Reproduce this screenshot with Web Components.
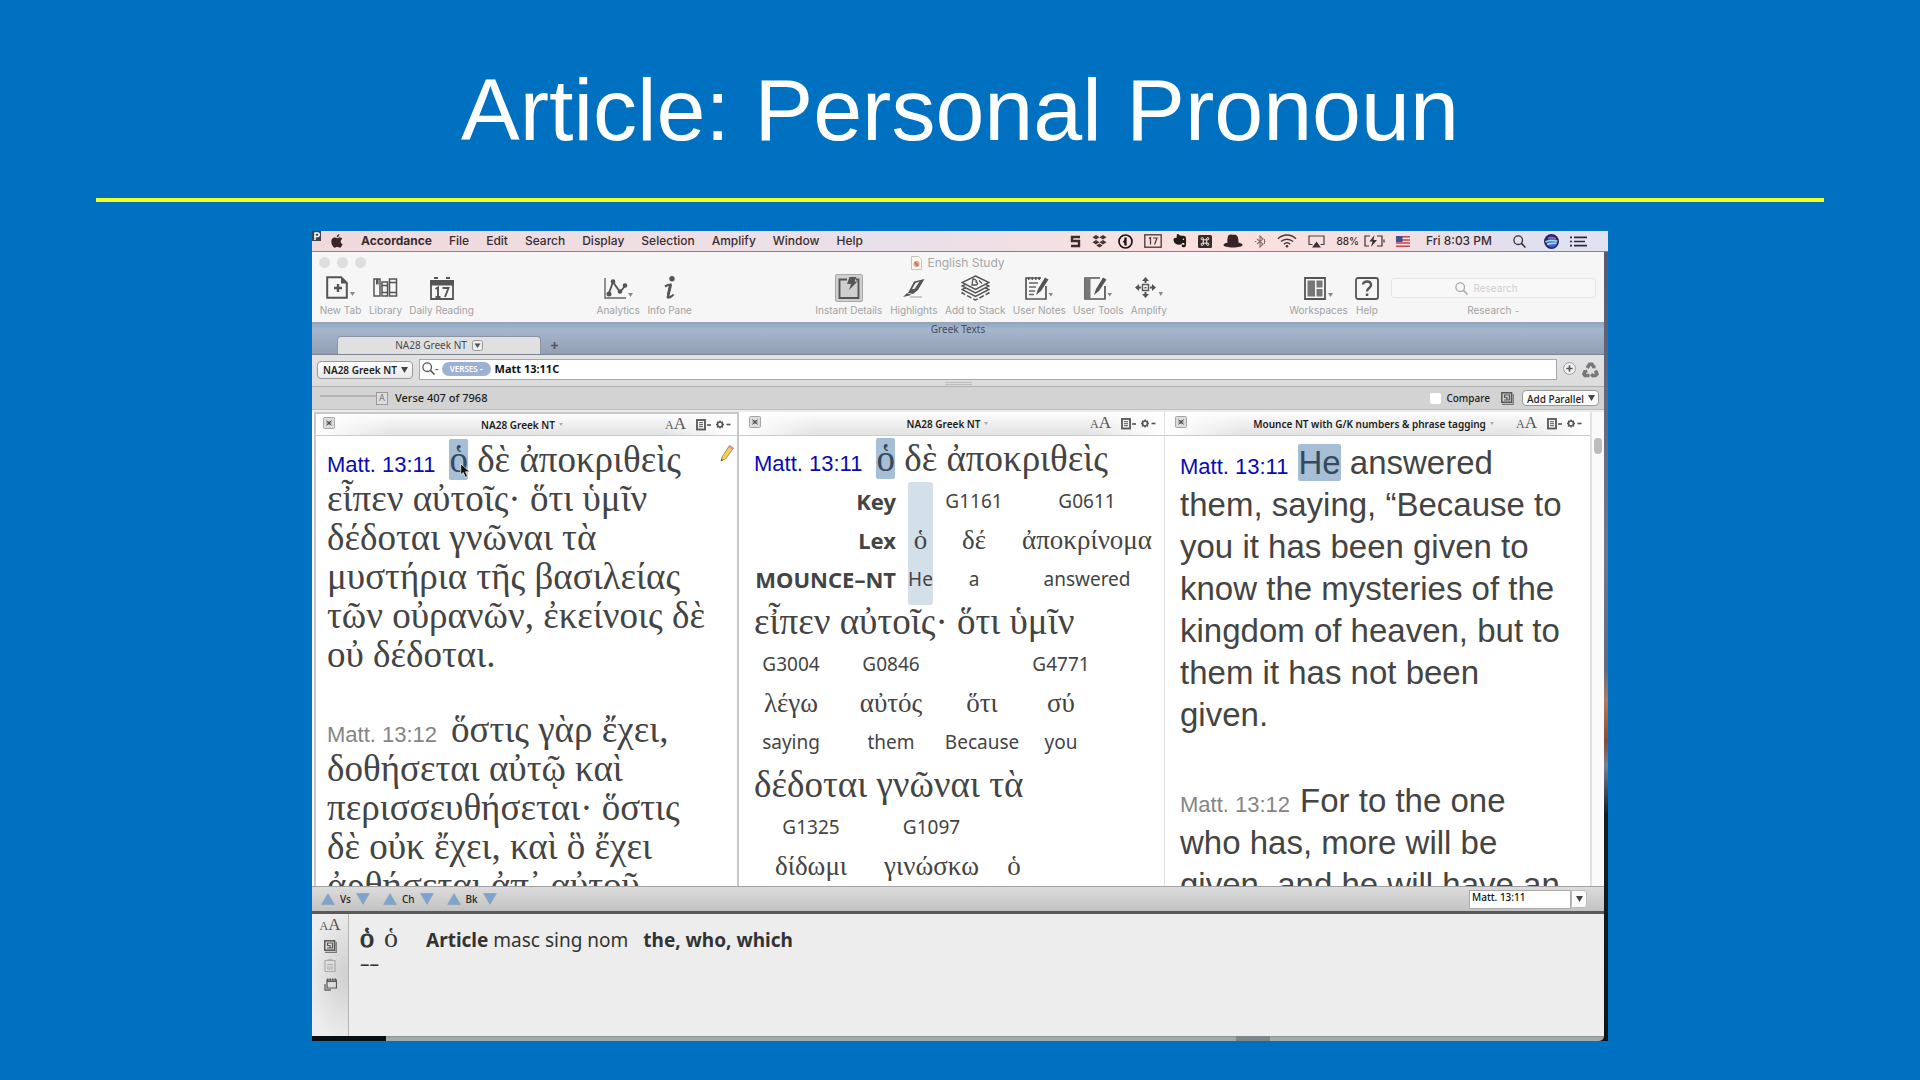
<!DOCTYPE html>
<html lang="en">
<head>
<meta charset="utf-8">
<title>Article: Personal Pronoun</title>
<style>
html,body{margin:0;height:100%}
body{background:#0070c0;font-family:"Noto Sans","Liberation Sans",sans-serif;color:#444}
</style>
</head>
<body>
<lesson-slide>
  <span slot="title">Article: Personal Pronoun</span>
  <study-app></study-app>
</lesson-slide>
<script>
const define=(name,html,setup)=>customElements.define(name,class extends HTMLElement{
  connectedCallback(){
    if(this.shadowRoot)return;
    const t=document.createElement('template');
    t.innerHTML='<style>*{box-sizing:border-box}button,input,select{font:inherit;color:inherit;margin:0;padding:0;border:0;background:none;border-radius:0;outline:0}select{appearance:none}</style>'+(typeof html==='function'?html(this):html);
    this.attachShadow({mode:'open'}).append(t.content.cloneNode(true));
    if(setup)setup(this);
  }
});

const ICONS={
 apple:[12,14,'<path fill="#3a2527" d="M8.300 0C8.500 1.600 7.200 3.200 5.800 3.200 5.600 1.700 6.900 .3 8.300 0zM11.600 10.200C11 11.700 9.900 13.700 8.700 13.700 7.800 13.700 7.500 13.100 6.300 13.100 5.100 13.100 4.800 13.700 3.900 13.700 2.500 13.700 .3 10.600 .3 7.700 .3 5 2 3.600 3.700 3.600 4.800 3.600 5.600 4.200 6.200 4.200 6.900 4.200 7.800 3.500 9 3.500 9.900 3.500 10.800 3.900 11.300 4.700 9 6.200 9.400 9.300 11.600 10.200z"/>'],
 parallels:[9,10,'<rect width="9" height="10" fill="#3d4450"/><path d="M3 9V2h2.500a1.600 1.600 0 0 1 0 3.500H3" fill="none" stroke="#fff" stroke-width="1.500"/>'],
 snag:[11,13,'<path d="M10 2H2v4h7v5H1" fill="none" stroke="#3a2c2a" stroke-width="2.400"/>'],
 dropbox:[15,13,'<g fill="#4a3330"><path d="M4 0l3.500 2.300L4 4.600.5 2.300zM11 0l3.500 2.300L11 4.600 7.500 2.300zM4 5l3.500 2.200L4 9.500.5 7.200zM11 5l3.500 2.200L11 9.500 7.500 7.200zM7.500 8.500l3.200 2-3.200 2.100-3.200-2.100z"/></g>'],
 onepass:[15,15,'<circle cx="7.500" cy="7.500" r="6.500" fill="none" stroke="#1d1515" stroke-width="1.700"/><path d="M7.500 3.500v3.200l-1 1 1 1v2.800" stroke="#1d1515" stroke-width="2.400" fill="none"/>'],
 cal:[18,14,'<rect x=".8" y=".8" width="16.400" height="12.400" fill="none" stroke="#463634" stroke-width="1.300"/><path d="M5 4.500l1.500-1v7M9 4h4l-2.500 6.500" fill="none" stroke="#463634" stroke-width="1.200"/>'],
 evernote:[14,14,'<path fill="#221a1a" d="M4 0C6 0 6 1 7 1.400c2 .2 5 .3 5.600 1.200.7 2 .7 7 .2 9.400-.4 1.700-3.500 1.700-4 .6-.4-1.200.2-2.400 1.500-2.400V11h1V9c-2-.4-2.600.3-3 1.500C4.500 11 1.500 10.500.7 7 0 4.500.8 3.700 3.600 3.700z"/><circle cx="10.500" cy="5.300" r=".7" fill="#fff"/>'],
 cmd:[14,13,'<rect width="14" height="13" rx="1.500" fill="#3a2b2b"/><path d="M5.300 4.800H8.700V8.200H5.300zM5.300 4.800V4a1.100 1.100 0 1 0-1.100.800zM8.700 4.800V4a1.100 1.100 0 1 1 1.100.800zM5.300 8.200V9a1.100 1.100 0 1 1-1.100-.8zM8.700 8.200V9a1.100 1.100 0 1 0 1.100-.8z" fill="none" stroke="#fff" stroke-width=".9"/>'],
 hat:[20,14,'<path fill="#382426" d="M4.500 8.500C4 4 5 .5 7.500.5 9 .5 9.500 1 10.500.8c3.500-.6 5 1.200 5 7.700 2 .5 4 1 4 2.500 0 1.500-4 2.500-9.500 2.500S.5 12.500.5 11C.5 9.500 2.500 9 4.500 8.500z"/>'],
 bt:[12,13,'<path d="M3 4l6 5-3 3V1l3 3-6 5" fill="none" stroke="#826c6c" stroke-width="1.100"/><path d="M1 6.500h1.200M10 6.500h1.500M10.500 4v5" stroke="#826c6c"/>'],
 wifi:[20,14,'<g fill="none" stroke="#46383c" stroke-width="1.400"><path d="M1 4.800C6-.2 14-.2 19 4.800M4 7.600c3.500-3.200 8.500-3.200 12 0M6.800 10.200c2-1.700 4.400-1.700 6.400 0"/></g><circle cx="10" cy="12.200" r="1.300" fill="#46383c"/>'],
 airplay:[17,13,'<path d="M4.500 9.500H1V1h15v8.500h-3.500" fill="none" stroke="#4b4045" stroke-width="1.200"/><path d="M8.500 6.500l4.500 6H4z" fill="#3c3035"/>'],
 battery:[21,12,'<path d="M6 1H1v10h4M13 1h5v10h-5M20 4.500v3" fill="none" stroke="#333" stroke-width="1.200"/><path d="M10.500 0L5.500 6.500h3L7 12l6-7h-3.500z" fill="#333"/>'],
 flag:[14,11,'<rect width="14" height="11" fill="#f3dfe2"/><path d="M0 .8h14M0 3.900h14M0 7h14M0 10.200h14" stroke="#c2454f" stroke-width="1.500"/><rect width="6.500" height="6" fill="#40508f"/>'],
 search:[13,13,'<circle cx="5.200" cy="5.200" r="4.300" fill="none" stroke="currentColor" stroke-width="1.300"/><path d="M8.400 8.400l4.100 4.100" stroke="currentColor" stroke-width="1.500"/>'],
 siri:[15,15,'<circle cx="7.500" cy="7.500" r="7.500" fill="#2b2460"/><circle cx="8" cy="8.500" r="5" fill="#3a67c9"/><path d="M1.500 8c4-3 8-1 12-1M3 10.500c4-2 6-.5 9.500-1.500" stroke="#9fe0f0" stroke-width="1.600" fill="none"/><path d="M4 4.500c3-2 6-1 8 .5" stroke="#b05bc4" stroke-width="1.400" fill="none"/>'],
 list:[17,11,'<path d="M0 1.300h2M0 5.500h2M0 9.700h2M4 1.300h13M4 5.500h11M4 9.700h13" stroke="#2b2b38" stroke-width="1.700"/>'],
 newtab:[29,24,'<path d="M1.200 1.200h14l5.600 5.600v15H1.200z" fill="none" stroke="#555" stroke-width="2"/><path d="M15 1v6.500h6z" fill="#555"/><path d="M8 12h8M12 8v8" stroke="#555" stroke-width="2.400"/><path d="M24 16h5l-2.500 4z" fill="#888"/>'],
 library:[25,20,'<g fill="none" stroke="#555" stroke-width="1.500"><path d="M1 1h6v17H1zM9 4h5.500v14H9zM16.500 1h7v17h-7zM9 7.500h5.500M9 14.500h5.500M16.500 4.500h7M16.500 14.500h7"/></g><path d="M3 1h2.600v6L4.300 5.800 3 7z" fill="#555"/>'],
 daily:[24,23,'<path d="M1 4h22v18H1z" fill="#f6f6f6" stroke="#555" stroke-width="1.800"/><path d="M0 3h24v5.500H0z" fill="#555"/><path d="M4 1h4M16 1h4" stroke="#555" stroke-width="2"/><path d="M5.500 12l2.500-1.500V20M5.500 20h5M12.500 11h6l-3.500 9" fill="none" stroke="#555" stroke-width="1.900"/>'],
 analytics:[29,23,'<path d="M1 1v20h21" fill="none" stroke="#666" stroke-width="1.400"/><path d="M5 16L9 5l7 10 5-6" fill="none" stroke="#555" stroke-width="1.800"/><g fill="#555"><circle cx="5" cy="17" r="2.500"/><circle cx="9" cy="4.500" r="2.300"/><circle cx="16" cy="14.500" r="2.300"/><circle cx="21" cy="8.500" r="2.300"/></g><path d="M24 16h5l-2.500 4z" fill="#888"/>'],
 info:[14,24,'<circle cx="9" cy="2.800" r="2.700" fill="#555"/><path d="M2 10.500c3-2 5.500-2 5.500-2S4 21 5 21.500s4.500-1.500 5.500-3" fill="none" stroke="#555" stroke-width="2.200"/><path d="M6 9h3L6 22H3.500z" fill="#555"/>'],
 instant:[28,28,'<rect x=".5" y=".5" width="27" height="27" rx="1.500" fill="#cfcfcf" stroke="#a8a8a8"/><path d="M12 5.500H4.500v18.500h19V5.500H21" fill="none" stroke="#555" stroke-width="1.900"/><path d="M14.500 3h7l-2 4.500h3L14 16l2-6h-4z" fill="#555"/>'],
 highlight:[24,20,'<path d="M12 3.500L22.500 1l-6.500 11-5 4-5-1z" fill="#555"/><path d="M12.500 11l5-7.500-4 1.500-3.500 6z" fill="#f2f2f2"/><path d="M5 15l4.500 2L1 19z" fill="#555"/><path d="M8 19h12" stroke="#999"/>'],
 stack:[29,26,'<g fill="#f5f5f5" stroke="#555" stroke-width="1.500"><path d="M14.500 11L28 18l-13.500 7L1 18z" stroke-dasharray="5 2"/><path d="M14.500 8L28 14.500l-13.500 7L1 14.500z"/><path d="M14.500 4.500L28 11l-13.500 7L1 11z"/><path d="M14.500 1L28 7.500l-13.500 7L1 7.500z"/></g><path d="M12 4l-1 6h4.500c2-1 1-3-1-3 2-.5 1-2.500-2.500-3zM18 5.500l3 3" fill="none" stroke="#555" stroke-width="1.300"/>'],
 notes:[28,25,'<path d="M21 10v13H1V2h15" fill="none" stroke="#555" stroke-width="1.700"/><path d="M3 2.500h14" stroke="#555" stroke-width="3" stroke-dasharray="1.500 2"/><path d="M4 7h9M4 11h7M4 15h6M4 18.500h5" stroke="#666" stroke-width="1.500"/><path d="M11 19l2-6L20 1.500l3.500 2L16 15z" fill="#555"/><path d="M23.500 17h4.500l-2.200 3.500z" fill="#888"/>'],
 tools:[28,25,'<path d="M21 10v13H1V2h15" fill="none" stroke="#555" stroke-width="1.700"/><path d="M1 2h5.500v21H1z" fill="#777"/><path d="M10 19l2-6L19 1.500l3.500 2L15 15z" fill="#555"/><path d="M23.500 17h4.500l-2.200 3.500z" fill="#888"/>'],
 amplify:[28,22,'<rect x="7.500" y="7.500" width="6" height="6" fill="none" stroke="#555" stroke-width="1.400"/><path d="M10.500 0l3.500 4H7zM10.500 21l3.500-4H7zM0 10.500L4 7v7zM21 10.500L17 7v7z" fill="#555"/><path d="M10.500 3v3M10.500 15v3M3 10.500h3M15 10.500h3" stroke="#555" stroke-width="2"/><path d="M9.500 10h2v1.500h-2z" fill="#555"/><path d="M23.500 15h4.500l-2.200 4z" fill="#888"/>'],
 work:[29,23,'<path d="M1 1h20v21H1z" fill="#f6f6f6" stroke="#555" stroke-width="1.800"/><path d="M3.500 3.500h7.500v16H3.500zM12.500 3.500h6v7h-6zM12.500 12h6v7.500h-6z" fill="#777"/><path d="M24 16h5l-2.500 4z" fill="#888"/>'],
 help:[24,23,'<rect x="1" y="1" width="22" height="21" rx="2" fill="none" stroke="#555" stroke-width="1.800"/><path d="M8 7.500C8 3.500 16 3.500 16 8c0 3-4 3-4 6.500" fill="none" stroke="#555" stroke-width="2.400"/><path d="M10.800 16.500h2.500V19h-2.500z" fill="#555"/>'],
 doc:[11,14,'<path d="M.5.5h7l3 3v10H.5z" fill="#fcf8f2" stroke="#c9c2b8"/><circle cx="5.500" cy="8" r="3" fill="#dba385"/><path d="M4 6l3 4" stroke="#a04c40"/>'],
 boxdown:[11,11,'<rect x=".5" y=".5" width="10" height="10" rx="2" fill="#eee" stroke="#999"/><path d="M2.500 3.500h6L5.500 8z" fill="#555"/>'],
 plus:[7,7,'<path d="M3.500 0v7M0 3.500h7" stroke="#555" stroke-width="1.700"/>'],
 circplus:[13,13,'<circle cx="6.500" cy="6.500" r="5.900" fill="#f4f4f4" stroke="#999"/><path d="M6.500 3.300v6.400M3.300 6.500h6.400" stroke="#555" stroke-width="1.600"/>'],
 recycle:[17,16,'<g fill="none" stroke="#777" stroke-width="3.400"><path d="M5.200 6L7.500 2.200h2.400L12 5.500"/><path d="M13.500 8.500L15 12l-1.500 1.500H10"/><path d="M3.500 8.500L1.800 12 3 13.500h4.500"/></g><path d="M10 6l3.500.6L13.500 3zM10.500 10.500v5.500l-2.500-2.700zM1 9l4-1.500.5 3.500z" fill="#777"/>'],
 layers:[13,13,'<path d="M1 12.300h11.300V2" fill="none" stroke="#777" stroke-width="1.200"/><rect x=".8" y=".8" width="9.800" height="9.400" fill="none" stroke="#555" stroke-width="1.500"/><path d="M3 8h5.500V3H3.500v2.500H6V8" fill="none" stroke="#555" stroke-width="1.200"/>'],
 close:[12,12,'<rect x=".5" y=".5" width="11" height="11" rx="1" fill="#dcdcdc" stroke="#a6a6a6"/><path d="M3.500 3.500l5 5M8.500 3.500l-5 5M3.500 5h5M3.500 7h5" stroke="#555" stroke-width="1"/>'],
 page:[15,12,'<rect x="1" y="1" width="8" height="9.500" fill="none" stroke="#555" stroke-width="1.800"/><path d="M3 3.700h4M3 5.700h4M3 7.700h4" stroke="#555"/><path d="M11 6h4" stroke="#555" stroke-width="1.600"/>'],
 gear:[15,9,'<circle cx="4" cy="4.500" r="2.500" fill="none" stroke="#555" stroke-width="1.700"/><path d="M4 .5v1.500M4 7v1.500M0 4.500h1.500M6.500 4.500H8M1.200 1.700l1 1M6 6.500l1 1M6.900 1.700l-1 1M2 6.500l-1 1" stroke="#555" stroke-width="1.400"/><path d="M10.500 4.500h4" stroke="#555" stroke-width="1.600"/>'],
 dot:[4,3,'<path d="M0 0h4L2 3z" fill="#aaa"/>'],
 up:[14,12,'<path d="M7 .7L13.300 11.400H.7z" fill="#7ea3cf" stroke="#8da0b5" stroke-width=".8"/>'],
 down:[14,12,'<path d="M7 11.300L13.300.6H.7z" fill="#7ea3cf" stroke="#8da0b5" stroke-width=".8"/>'],
 tri:[7,6,'<path d="M0 0h7L3.500 6z" fill="#444"/>'],
 note:[12,13,'<path d="M1 1.500h10v11H1zM3 5.500h6M3 8h6M3 10h6M3.500.8h5" fill="none" stroke="#aaa" stroke-width="1.200"/>'],
 wins:[13,13,'<path d="M3 2h9.500v8H3zM3 3.500h9.500" fill="none" stroke="#555" stroke-width="1.200"/><path d="M3 1.500h9.500" stroke="#555" stroke-width="2" stroke-dasharray="1.500 1"/><path d="M1 6v6h6" fill="none" stroke="#666" stroke-width="1.300"/>'],
 pencil:[14,18,'<path d="M1 17l1-4L9.500 1.500l4 2.500L5.500 15z" fill="#f0d060" stroke="#7a6a40" stroke-width=".7"/><path d="M9.500 1.500l4 2.500-1 1.500-4-2.500z" fill="#e58a9c"/><path d="M1 17l.6-2 1.300 1z" fill="#333"/>'],
 cursor:[11,15,'<path d="M.7.8v11l2.600-2.300 2 4.800 2.200-1-2-4.500H9.800z" fill="#111" stroke="#fff" stroke-width=".7"/>']
};
define('sym-icon',el=>{const [w,h,s]=ICONS[el.getAttribute('name')];
  return `<style>:host{display:inline-flex;flex:none}svg{display:block}</style><svg aria-hidden="true" width="${w}" height="${h}" viewBox="0 0 ${w} ${h}">${s}</svg>`});

define('lesson-slide',`<style>
:host{display:flex;flex-direction:column;align-items:center;height:100vh;box-sizing:border-box;padding:60px 0 39px}
h1{margin:0;font:400 88px/100px "Liberation Sans",sans-serif;color:#fff;text-align:center}
hr{width:90%;height:4px;margin:38px 0 29px;border:0;background:#f2ff1e;flex:none}
::slotted(study-app){flex:1;min-height:0;width:67.5%}
</style><h1><slot name="title"></slot></h1><hr><slot></slot>`);

define('study-app',`<style>
:host{display:grid;grid-template-rows:auto 1fr;background:linear-gradient(#55586f,#6d7890 40%,#5d6a82 54%,#b5795a 58%,#8a4a35 63%,#7a8094 66%,#151c28 72%,#0d141e)}
.desk{display:grid;grid-template-rows:1fr 5px;margin-right:4px;min-height:0}
.win{display:flex;flex-direction:column;min-height:0;background:#ececec}
.panes{flex:1;display:flex;min-height:0;background:#fff;overflow:hidden}
text-pane{flex:427 1 0;min-width:0}
text-pane[active]{flex-grow:423}
.sb{width:13px;background:#fafafa;border-left:1px solid #e2e2e2;padding:26px 2px 0}
.sb i{display:block;height:16px;width:8px;border-radius:4px;background:#bcbcbc}
.strip{display:flex;background:linear-gradient(#8c9193,#a4abae 40%);border-radius:0 0 5px 0}
.strip i{width:74px;background:#0a0f14}
.strip b{margin-left:auto;margin-right:334px;width:34px;background:#7f8689}
.ref{font:22px/22px "Liberation Sans",sans-serif;color:#0a0ab4;margin-right:14px}
.ref.o{color:#858585}
mark{color:#37495c;background:#a6bfd6;border-radius:2px;position:relative}
mark sym-icon{position:absolute;left:11px;top:24px}
p{margin:0;white-space:nowrap}
.gk{font:37px/39px "Liberation Serif",serif;padding-top:4px}
.gk p+p{margin-top:36px}
.en{font:33px/42px "Liberation Sans",sans-serif;padding-top:6px}
.en .ref{margin-right:10px}
.en p+p{margin-top:44px}
.il{font:37px/46px "Liberation Serif",serif}
.pen{position:absolute;right:3px;top:8px}
</style>
<mac-menubar></mac-menubar>
<div class="desk"><div class="win">
<app-toolbar></app-toolbar><tab-strip></tab-strip><search-row></search-row><verse-bar></verse-bar>
<div class="panes">
<text-pane active heading="NA28 Greek NT"><sym-icon class="pen" name="pencil"></sym-icon><div class="gk">
<p><span class="ref">Matt. 13:11</span><mark>ὁ<sym-icon name="cursor"></sym-icon></mark> δὲ ἀποκριθεὶς<br>εἶπεν αὐτοῖς· ὅτι ὑμῖν<br>δέδοται γνῶναι τὰ<br>μυστήρια τῆς βασιλείας<br>τῶν οὐρανῶν, ἐκείνοις δὲ<br>οὐ δέδοται.</p>
<p><span class="ref o">Matt. 13:12</span>ὅστις γὰρ ἔχει,<br>δοθήσεται αὐτῷ καὶ<br>περισσευθήσεται· ὅστις<br>δὲ οὐκ ἔχει, καὶ ὃ ἔχει<br>ἀρθήσεται ἀπ᾽ αὐτοῦ</p></div></text-pane>
<text-pane heading="NA28 Greek NT"><div class="il">
<p><span class="ref">Matt. 13:11</span><mark>ὁ</mark> δὲ ἀποκριθεὶς</p>
<gloss-grid cols="142px 12px 25px 11px 60px 13px 140px" labels="Key|Lex|MOUNCE–NT" cells="~G1161~G0611|ὁ~δέ~ἀποκρίνομα|He~a~answered" hot="0"></gloss-grid>
<p>εἶπεν αὐτοῖς· ὅτι ὑμῖν</p>
<gloss-grid cols="7px 60px 37px 66px 22px 72px 13px 60px" cells="G3004~G0846~~G4771|λέγω~αὐτός~ὅτι~σύ|saying~them~Because~you"></gloss-grid>
<p>δέδοται γνῶναι τὰ</p>
<gloss-grid cols="21px 72px 36px 97px 28px 12px" cells="G1325~G1097~|δίδωμι~γινώσκω~ὁ"></gloss-grid>
</div></text-pane>
<text-pane heading="Mounce NT with G/K numbers &amp; phrase tagging"><div class="en">
<p><span class="ref">Matt. 13:11</span><mark>He</mark> answered<br>them, saying, “Because to<br>you it has been given to<br>know the mysteries of the<br>kingdom of heaven, but to<br>them it has not been<br>given.</p>
<p><span class="ref o">Matt. 13:12</span>For to the one<br>who has, more will be<br>given, and he will have an</p></div></text-pane>
<div class="sb"><i></i></div>
</div>
<verse-nav></verse-nav><details-panel></details-panel>
</div><div class="strip"><i></i><b></b></div></div>`);

define('mac-menubar',`<style>
:host{display:flex;align-items:center;height:21px;border-bottom:1px solid #8d8087;box-sizing:border-box;background:linear-gradient(90deg,#f0d9db,#eedfe4 30%,#e9e0ea 45%,#fbe0dd 68%,#f7dfe0 82%,#e4dfec 90%,#dfe2f2);font:500 12px/20px Inter,sans-serif;color:#3a2c30;white-space:nowrap}
nav{display:flex;gap:17px;margin-left:18px}
nav button:first-child{font-weight:700}
.p{align-self:flex-start;}
.apple{margin-left:10px}
.st{display:flex;align-items:center;margin-left:auto;margin-right:21px;gap:11px}
.st>*{flex:none}
.bat{display:flex;align-items:center;gap:5px;font-size:10px}
.clk{margin:0 10px 0 5px}
.siri{margin-left:7px}
</style><sym-icon class="p" name="parallels"></sym-icon><sym-icon class="apple" name="apple"></sym-icon>
<nav><button>Accordance</button><button>File</button><button>Edit</button><button>Search</button><button>Display</button><button>Selection</button><button>Amplify</button><button>Window</button><button>Help</button></nav>
<div class="st"><sym-icon name="snag"></sym-icon><sym-icon name="dropbox"></sym-icon><sym-icon name="onepass"></sym-icon><sym-icon name="cal"></sym-icon><sym-icon name="evernote"></sym-icon><sym-icon name="cmd"></sym-icon><sym-icon name="hat"></sym-icon><sym-icon name="bt"></sym-icon><sym-icon name="wifi"></sym-icon><sym-icon name="airplay"></sym-icon><span class="bat">88%<sym-icon name="battery"></sym-icon></span><sym-icon name="flag"></sym-icon><span class="clk">Fri 8:03 PM</span><sym-icon name="search"></sym-icon><sym-icon class="siri" name="siri"></sym-icon><sym-icon name="list"></sym-icon></div>`);

define('tool-item',el=>`<style>
:host{display:block}
button{display:flex;flex-direction:column;align-items:center;justify-content:flex-end;width:${el.getAttribute('w')}px;font:10px/14px Inter,sans-serif;color:#a2a2a2;white-space:nowrap}
span{height:30px;display:flex;align-items:center;justify-content:center}
</style><button><span><sym-icon name="${el.getAttribute('icon')}"></sym-icon></span><slot></slot></button>`);

define('app-toolbar',`<style>
:host{display:block;background:#f6f6f6}
.t{display:grid;grid-template-columns:1fr auto 1fr;align-items:center;height:21px;font:12px/20px Inter,sans-serif;color:#a6a6a6}
.l{display:flex;gap:7px;padding-left:7px}
.l i{width:11px;height:11px;border-radius:50%;background:#dedede}
.n{display:flex;gap:5px;align-items:center}
.b{display:flex;justify-content:space-between;padding:0 8px;height:49px}
.g{display:flex;gap:8px}
.r{display:flex;flex-direction:column;align-items:center;width:205px;margin-left:4px;font:10px/14px Inter,sans-serif;color:#a2a2a2}
.f{display:flex;align-items:center;justify-content:center;gap:5px;width:100%;height:20px;margin:5px 0;border:1px solid #e4e4e4;border-radius:3px;background:#f8f8f8;color:#a8a8a8}
.f input{width:58px}.f input::placeholder{color:#cfcfcf;opacity:1}
</style>
<div class="t"><div class="l"><i></i><i></i><i></i></div><div class="n"><sym-icon name="doc"></sym-icon>English Study</div><i></i></div>
<div class="b"><div class="g"><tool-item icon="newtab" w="41">New Tab</tool-item><tool-item icon="library" w="33">Library</tool-item><tool-item icon="daily" w="63">Daily Reading</tool-item></div>
<div class="g"><tool-item icon="analytics" w="43">Analytics</tool-item><tool-item icon="info" w="44">Info Pane</tool-item></div>
<div class="g"><tool-item icon="instant" w="67">Instant Details</tool-item><tool-item icon="highlight" w="47">Highlights</tool-item><tool-item icon="stack" w="60">Add to Stack</tool-item><tool-item icon="notes" w="52">User Notes</tool-item><tool-item icon="tools" w="50">User Tools</tool-item><tool-item icon="amplify" w="35">Amplify</tool-item></div>
<div class="g"><tool-item icon="work" w="57">Workspaces</tool-item><tool-item icon="help" w="24">Help</tool-item><div class="r"><label class="f"><sym-icon name="search"></sym-icon><input type="search" aria-label="Research" placeholder="Research"></label>Research ⁃</div></div></div>`);

define('tab-strip',`<style>
:host{display:block;background:linear-gradient(#93a5c1,#a6b6cf 20%,#9cabc1 60%,#929fb2);border-top:1px solid #9aa3b3;border-bottom:1px solid #7b8490;font:10px/13px "Noto Sans",sans-serif;color:#444b55}
.n{text-align:center}
.r{display:flex;align-items:flex-end;padding-left:25px;gap:10px}
.tab{display:flex;align-items:center;justify-content:center;gap:5px;width:204px;height:18px;border-radius:4px 4px 0 0;background:#e0e0e0;border:1px solid #8b94a2;border-bottom:0}
.add{height:18px;display:flex;align-items:center}
</style><div class="n">Greek Texts</div><div class="r"><button class="tab">NA28 Greek NT<sym-icon name="boxdown"></sym-icon></button><button class="add" aria-label="New tab"><sym-icon name="plus"></sym-icon></button></div>`);

define('search-row',`<style>
:host{display:block;background:linear-gradient(#e2e2e2,#dcdcdc);border-bottom:1px solid #b0b0b0;font:500 11px/17px "Noto Sans",sans-serif;color:#222}
.r{display:flex;align-items:center;padding:4px 5px 0;height:25px}
.s{position:relative;display:flex}
.s select{width:96px;height:18px;padding-left:5px;border:1px solid #999;border-radius:4px;background:linear-gradient(#fff,#e8e8e8);font-size:10px;font-weight:600}
.s sym-icon{position:absolute;right:5px;top:6px;pointer-events:none}
.f{flex:1;display:flex;align-items:center;height:21px;margin-left:6px;padding:0 0 2px 2px;background:#fff;border:1px solid #a8a8a8;color:#555}
.v{width:49px;height:14px;border-radius:7px;background:#9db2d2;color:#fff;font:600 8px/14px "Noto Sans",sans-serif;margin:0 4px 0 3px}
.f input{flex:1;font-weight:700;color:#111;height:17px}
.a{display:flex;gap:6px;margin-left:6px}
.g{display:flex;justify-content:center;height:6px;padding-top:2px}.g i{width:27px;height:3px;border:solid #bbb;border-width:1px 0}
</style><div class="r"><span class="s"><select aria-label="Search text"><option>NA28 Greek NT</option></select><sym-icon name="tri"></sym-icon></span>
<div class="f"><sym-icon name="search"></sym-icon>-<button class="v">VERSES ⁃</button><input aria-label="Search" value="Matt 13:11C"></div><div class="a"><sym-icon name="circplus"></sym-icon><sym-icon name="recycle"></sym-icon></div></div><div class="g"><i></i></div>`);

define('verse-bar',`<style>
:host{display:flex;align-items:center;height:23px;box-sizing:border-box;background:#d3d3d3;border-bottom:1px solid #bdbdbd;padding:0 5px 0 8px;font:500 10px/16px "Noto Sans",sans-serif;color:#222;margin-bottom:2px}
.sl{position:relative;width:68px;height:14px;margin-right:7px}
.sl input{appearance:none;width:68px;height:14px;display:block;background:linear-gradient(#b4b4b4,#b4b4b4) 0 4px/58px 2px no-repeat}
.sl input::-webkit-slider-thumb{appearance:none;width:12px;height:13px;border:1px solid #999;background:#dedede}
.sl span{position:absolute;right:3px;top:-1px;font-size:9px;color:#888;pointer-events:none}
.v{font-size:11px}
.r{margin-left:auto;display:flex;align-items:center}
label{display:flex;align-items:center;gap:5px;margin-right:11px}
label input{appearance:none;width:11px;height:11px;background:#fff;border-radius:2px}
.s{position:relative;display:flex;margin-left:8px}
.s select{width:77px;height:16px;padding-left:4px;border:1px solid #999;border-radius:4px;background:#fbfbfb}
.s sym-icon{position:absolute;right:4px;top:5px;pointer-events:none}
</style><div class="sl"><input type="range" aria-label="Scroll position" value="100"><span>A</span></div><span class="v">Verse 407 of 7968</span>
<div class="r"><label><input type="checkbox">Compare</label><sym-icon name="layers"></sym-icon><span class="s"><select aria-label="Add Parallel"><option>Add Parallel</option></select><sym-icon name="tri"></sym-icon></span></div>`);

define('text-pane',el=>`<style>
:host{display:flex;flex-direction:column;position:relative;box-sizing:border-box;overflow:hidden;border-right:1px solid #e2e2e2}
:host([active]){border:solid #c6c8c9;border-width:2px 2px 0 2px;margin:0 0 0 2px}
header{display:flex;align-items:center;flex:none;height:24px;padding:0 8px 0 10px;border-bottom:1px solid #ccc;background:linear-gradient(90deg,#fff,transparent 18%,transparent 82%,#fff),linear-gradient(#fdfdfd,#e2e2e2);font:600 10px/20px "Noto Sans",sans-serif;color:#1c1c1c}
:host([active]) header{height:22px;padding:0 6px 0 7px}
h2{flex:1;font:inherit;margin:0;padding-left:44px;text-align:center;white-space:nowrap;display:flex;gap:4px;align-items:center;justify-content:center}
.a{font:12px/20px "Liberation Serif",serif;color:#555;margin-right:10px}.a big{font-size:17px}
.g{margin-left:5px}
.body{position:relative;flex:1;padding-left:15px;min-height:0}
:host([active]) .body{padding-left:11px}
</style><header><button aria-label="Close pane"><sym-icon name="close"></sym-icon></button><h2>${el.getAttribute('heading').replace('&','&amp;')}<sym-icon name="dot"></sym-icon></h2><span class="a">A<big>A</big></span><sym-icon name="page"></sym-icon><sym-icon class="g" name="gear"></sym-icon></header><div class="body"><slot></slot></div>`);

define('gloss-grid',el=>{
 const rows=el.getAttribute('cells').split('|').map(r=>r.split('~'));
 const labels=(el.getAttribute('labels')||'').split('|').filter(Boolean);
 const hot=el.getAttribute('hot');
 let out='';
 if(hot!==null)out+=`<div class="hot" style="grid-area:1/3/span 3/4"></div>`;
 labels.forEach((l,i)=>out+=`<b style="grid-area:${i+1}/1">${l}</b>`);
 const first=labels.length?3:2;
 rows.forEach((r,i)=>r.forEach((c,j)=>{if(c)out+=`<span class="${/[A-Za-z]/.test(c)?'':'gr'}" style="grid-area:${i+1}/${first+2*j}">${c}</span>`}));
 return `<style>:host{display:grid;grid-template-columns:${el.getAttribute('cols')};grid-auto-rows:39px;font:19px/39px "Noto Sans",sans-serif;white-space:nowrap}
b{font-size:22px;justify-self:end}span{position:relative;display:flex;justify-content:center}.gr{font:27px/39px "Liberation Serif",serif}.hot{background:#d3dfe9;border-radius:3px;margin-bottom:-6px}</style>${out}`});

define('verse-nav',`<style>
:host{display:flex;align-items:center;flex:none;height:28px;box-sizing:border-box;background:linear-gradient(#dcdcdc,#c2c2c2);border-top:1px solid #a2a2a2;border-bottom:3px solid #5a5a5a;padding:0 17px 0 9px;font:500 10px/16px "Noto Sans",sans-serif;color:#222}
.g{display:flex;align-items:center;gap:5px;margin-right:13px}
button{display:flex}
.c{margin-left:auto;display:flex}
.c input{width:102px;height:19px;background:#fff;border:1px solid #aaa;padding-left:2px;padding-bottom:4px;color:#111}
.c button{width:16px;height:18px;background:#fafafa;border:1px solid #bbb;border-radius:0 3px 3px 0;align-items:center;justify-content:center}
</style><div class="g"><button aria-label="Previous verse"><sym-icon name="up"></sym-icon></button>Vs<button aria-label="Next verse"><sym-icon name="down"></sym-icon></button></div><div class="g"><button aria-label="Previous chapter"><sym-icon name="up"></sym-icon></button>Ch<button aria-label="Next chapter"><sym-icon name="down"></sym-icon></button></div><div class="g"><button aria-label="Previous book"><sym-icon name="up"></sym-icon></button>Bk<button aria-label="Next book"><sym-icon name="down"></sym-icon></button></div>
<div class="c"><input aria-label="Go to verse" value="Matt. 13:11"><button aria-label="Verse list"><sym-icon name="tri"></sym-icon></button></div>`);

define('details-panel',`<style>
:host{display:flex;flex:none;height:122px;background:#ededed;border-radius:0 0 4px 4px;color:#333;font:19px/26px "Noto Sans",sans-serif}
.rail{display:flex;flex-direction:column;align-items:center;gap:6px;width:37px;padding-top:3px;border-right:1px solid #b5b5b5;background:radial-gradient(ellipse at 100% 50%,#cfcfcf,#ededed 80%)}
.a{font:12px/16px "Liberation Serif",serif;color:#555}.a big{font-size:17px}
.m{padding:11px 11px 0;white-space:nowrap}
.l{display:flex;align-items:baseline;height:26px}
.w{font:28px/26px "Liberation Serif",serif;margin-right:10px}
.s{-webkit-text-stroke:1px #333}
.d{margin-left:18px}.k{margin-left:15px}
p{margin:0;font-size:19px;line-height:26px}
</style><div class="rail"><span class="a">A<big>A</big></span><sym-icon name="layers"></sym-icon><sym-icon name="note"></sym-icon><sym-icon name="wins"></sym-icon></div>
<div class="m"><div class="l"><span class="w s">ὁ</span><span class="w">ὁ</span><span class="d"><b>Article</b> masc sing nom</span><b class="k">the, who, which</b></div><p>––</p></div>`);
</script>
</body>
</html>
